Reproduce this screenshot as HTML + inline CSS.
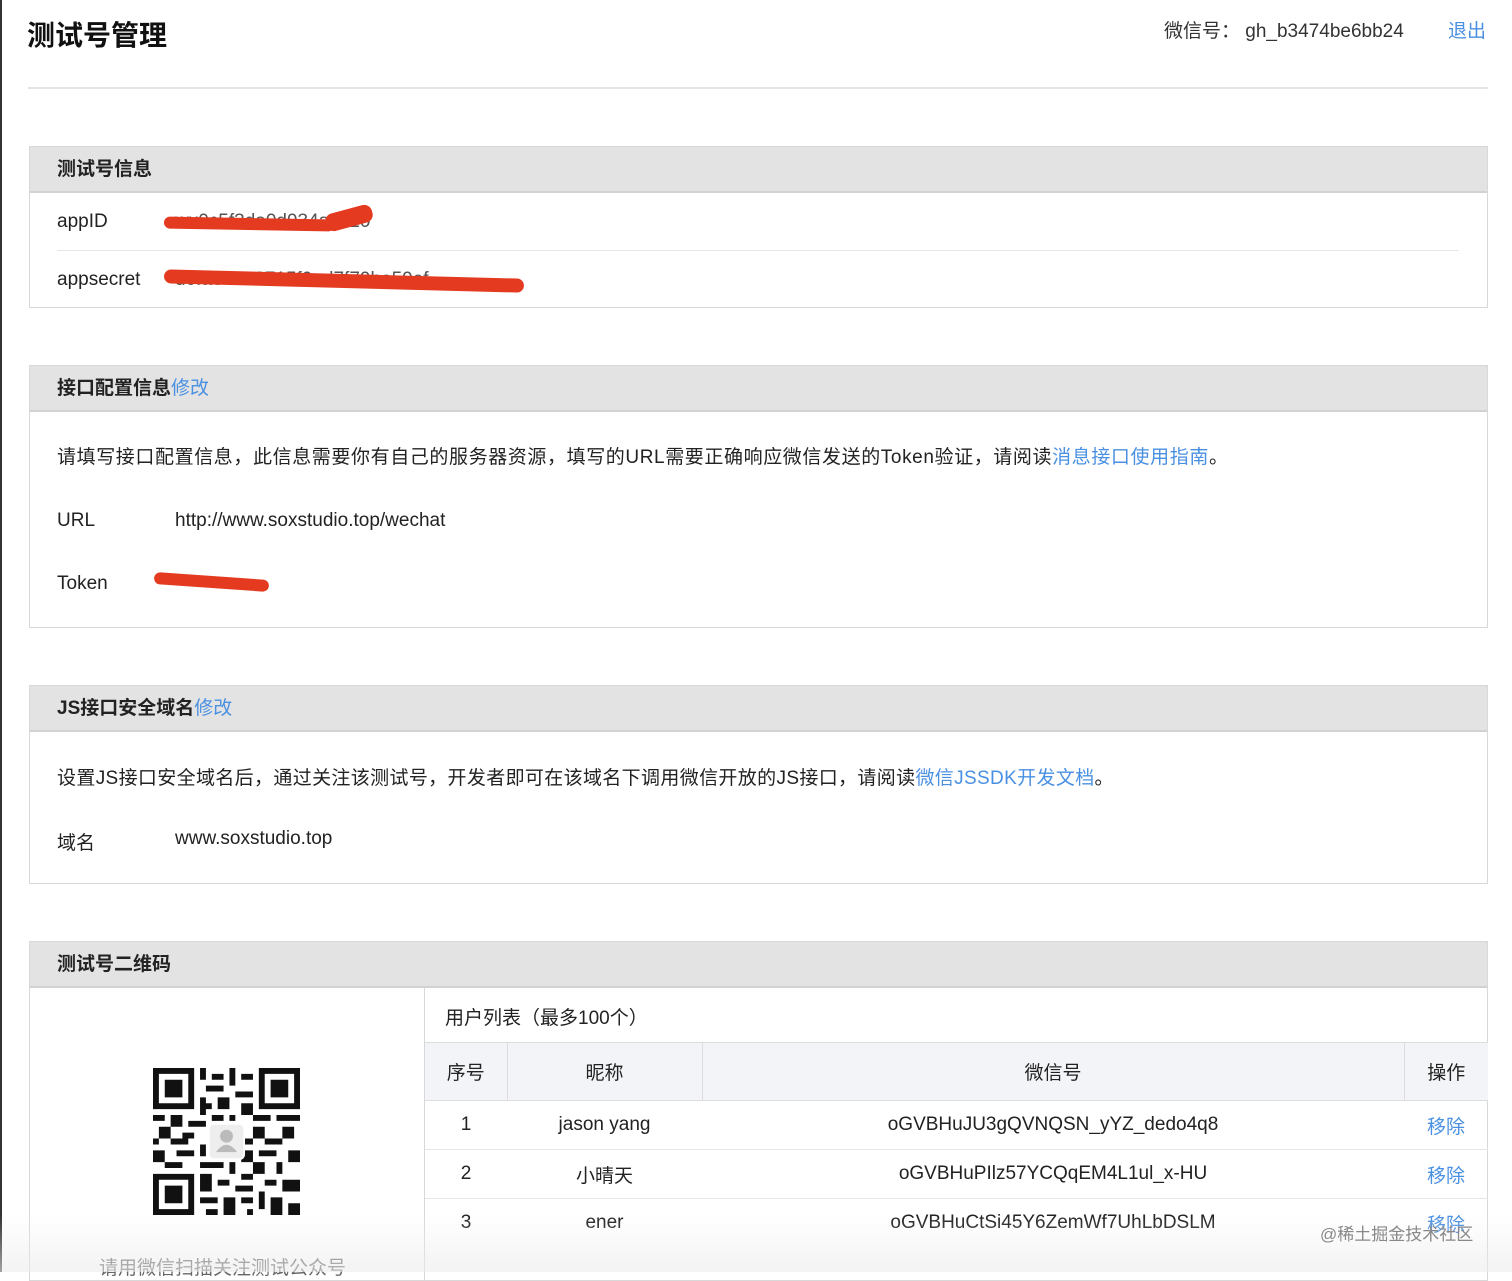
<!DOCTYPE html>
<html><head><meta charset="utf-8"><style>
*{margin:0;padding:0;box-sizing:border-box}
body{width:1512px;height:1272px;overflow:hidden;background:#fff;font-family:"Liberation Sans","Noto Sans CJK SC",sans-serif;color:#222;position:relative}
.abs{position:absolute}
h1{position:absolute;left:27px;top:14px;font-size:28px;font-weight:bold;color:#111}
.top{position:absolute;top:16px;font-size:19px;color:#333}
.hr{position:absolute;left:28px;width:1460px;top:87px;border-top:2px solid #e4e4e4}
.panel{position:absolute;left:29px;width:1459px;border:1px solid #d8d8d8;background:#fff}
.ph{height:46px;background:#e3e3e3;border-bottom:2px solid #d2d2d2;font-size:19px;font-weight:bold;padding-left:27px;line-height:46px;color:#222}
a{color:#4a90e2;text-decoration:none;font-weight:normal}
.t{position:absolute;font-size:19px;color:#222;white-space:nowrap}
.red{position:absolute;background:#e33a20;border-radius:8px}
table{border-collapse:collapse;font-size:19px}
td{text-align:center}
</style></head><body>
<div class="abs" style="left:0;top:0;width:2px;height:1272px;background:#333"></div>
<h1>测试号管理</h1>
<div class="top" style="left:1164px">微信号：&nbsp;gh_b3474be6bb24</div>
<div class="top" style="left:1448px"><a>退出</a></div>
<div class="hr"></div>

<div class="panel" style="top:146px;height:162px">
<div class="ph">测试号信息</div>
<div class="t" style="left:27px;top:64px">appID</div>
<div class="t" style="left:27px;top:122px">appsecret</div>
<div class="abs" style="left:27px;right:28px;top:103px;border-top:1px solid #e6e6e6"></div>
<div class="t" style="left:145px;top:64px;color:#555">wx0c5f3da0d934a5c20</div>
<div class="red" style="left:134px;top:71px;width:170px;height:12px;transform:rotate(1deg)"></div>
<div class="red" style="left:295px;top:62px;width:48px;height:18px;transform:rotate(-15deg)"></div>
<div class="t" style="left:145px;top:122px;color:#555">d0fae45e0715f0ad7f79be59ef</div>
<div class="red" style="left:134px;top:127px;width:360px;height:14px;transform:rotate(1.5deg)"></div>
</div>

<div class="panel" style="top:365px;height:263px">
<div class="ph">接口配置信息<a>修改</a></div>
<div class="t" style="left:27px;top:76px;letter-spacing:0.6px">请填写接口配置信息，此信息需要你有自己的服务器资源，填写的URL需要正确响应微信发送的Token验证，请阅读<a>消息接口使用指南</a>。</div>
<div class="t" style="left:27px;top:144px">URL</div>
<div class="t" style="left:145px;top:144px">http://www.soxstudio.top/wechat</div>
<div class="t" style="left:27px;top:207px">Token</div>
<div class="red" style="left:124px;top:210px;width:115px;height:12px;transform:rotate(4deg)"></div>
</div>

<div class="panel" style="top:685px;height:199px">
<div class="ph">JS接口安全域名<a>修改</a></div>
<div class="t" style="left:27px;top:77px;letter-spacing:0.35px">设置JS接口安全域名后，通过关注该测试号，开发者即可在该域名下调用微信开放的JS接口，请阅读<a>微信JSSDK开发文档</a>。</div>
<div class="t" style="left:27px;top:142px">域名</div>
<div class="t" style="left:145px;top:142px">www.soxstudio.top</div>
</div>

<div class="panel" style="top:941px;height:340px">
<div class="ph">测试号二维码</div>
<div class="abs" style="left:394px;top:46px;bottom:0;border-left:1px solid #d8d8d8"></div>
<svg class="abs" style="left:123px;top:126px" width="147" height="147" viewBox="0 0 25 25">
<g fill="#111">
<path d="M0 0h7v7h-7zM1 1v5h5v-5zM2 2h3v3h-3z" fill-rule="evenodd"/>
<path d="M18 0h7v7h-7zM19 1v5h5v-5zM20 2h3v3h-3z" fill-rule="evenodd"/>
<path d="M0 18h7v7h-7zM1 19v5h5v-5zM2 20h3v3h-3z" fill-rule="evenodd"/>
<path d="M8 0h1v2h-1zM10 1h2v1h-2zM13 0h1v3h-1zM15 1h2v1h-2zM9 3h3v1h-3zM14 4h3v1h-3zM8 5h1v3h-1zM11 5h2v2h-2zM15 6h2v2h-2zM0 8h2v1h-2zM3 8h2v2h-2zM6 9h3v1h-3zM10 8h2v1h-2zM13 8h1v1h-1zM17 8h3v1h-3zM21 8h4v1h-4zM1 10h2v2h-2zM5 11h2v1h-2zM14 10h1v2h-1zM17 10h2v2h-2zM22 10h2v2h-2zM0 12h1v1h-1zM3 12h3v1h-3zM15 12h2v1h-2zM19 12h3v1h-3zM8 13h1v2h-1zM0 14h2v2h-2zM4 14h3v1h-3zM15 14h2v2h-2zM18 14h3v1h-3zM23 14h2v2h-2zM2 16h3v1h-3zM8 16h4v1h-4zM13 16h1v2h-1zM17 16h2v2h-2zM21 16h1v2h-1zM15 18h2v1h-2zM8 18h2v3h-2zM11 19h2v1h-2zM14 20h3v1h-3zM19 19h2v1h-2zM22 19h3v2h-3zM18 21h1v3h-1zM8 22h3v1h-3zM12 22h2v3h-2zM15 22h2v1h-2zM20 22h2v3h-2zM23 23h2v2h-2zM9 24h2v1h-2zM16 24h1v1h-1zM10 10h1v1h-1zM11 14h1v1h-1zM20 5h0zM9 6h1v1h-1z"/>
</g>
<rect x="9.5" y="9.5" width="6" height="6" rx="0.8" fill="#eee" stroke="#fff" stroke-width="0.3"/>
<circle cx="12.5" cy="11.6" r="1.1" fill="#bbb"/><path d="M10.7 14.3q1.8-2.5 3.6 0z" fill="#bbb"/>
</svg>
<div class="t" style="left:69px;top:311px;color:#666">请用微信扫描关注测试公众号</div>
<div class="t" style="left:415px;top:61px">用户列表（最多100个）</div>
<table class="abs" style="left:395px;top:100px;width:1063px">
<tr style="background:#f3f4f8;height:58px;border-top:1px solid #ddd;border-bottom:1px solid #ddd"><td style="width:82px;border-right:1px solid #ddd">序号</td><td style="width:195px;border-right:1px solid #ddd">昵称</td><td style="width:702px;border-right:1px solid #ddd">微信号</td><td>操作</td></tr>
<tr style="height:49px;border-bottom:1px solid #e6e6e6"><td>1</td><td>jason yang</td><td>oGVBHuJU3gQVNQSN_yYZ_dedo4q8</td><td><a>移除</a></td></tr>
<tr style="height:49px;border-bottom:1px solid #e6e6e6"><td>2</td><td>小晴天</td><td>oGVBHuPIlz57YCQqEM4L1ul_x-HU</td><td><a>移除</a></td></tr>
<tr style="height:49px"><td>3</td><td>ener</td><td>oGVBHuCtSi45Y6ZemWf7UhLbDSLM</td><td><a>移除</a></td></tr>
</table>
</div>
<div class="abs" style="left:0;right:0;top:1215px;height:57px;background:linear-gradient(rgba(240,240,240,0),rgba(235,235,235,0.6))"></div>
<div class="t" style="left:1320px;top:1220px;font-size:17px;color:#888">@稀土掘金技术社区</div>
</body></html>
